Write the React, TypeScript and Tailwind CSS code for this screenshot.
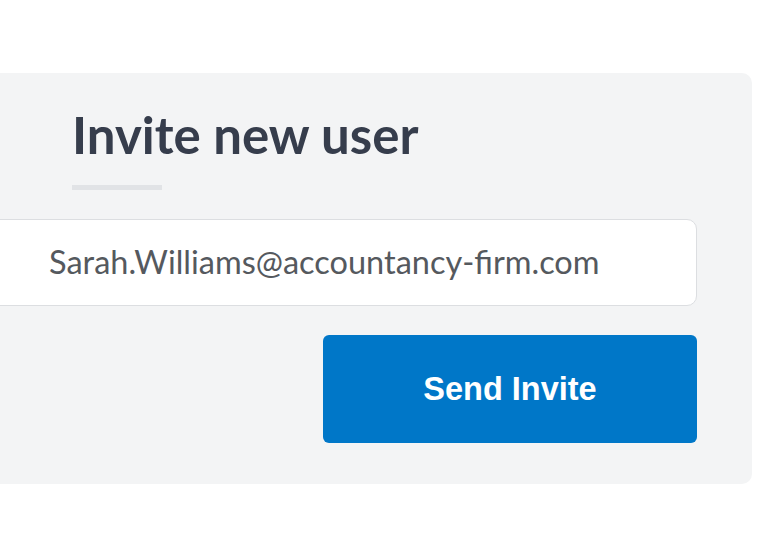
export default function App() {
  return (
    <div className="w-[768px] h-[560px] bg-white overflow-hidden pt-[73px]">
      <div className="-ml-[80px] w-[832px] h-[411px] rounded-[10px] bg-[#f3f4f5] pl-[56px] pr-[55px] pt-[30px]">
        <h1 className="ml-[96px] text-[51px] leading-[64px] font-bold text-[#363d4c] font-['Lato',sans-serif]">
          Invite new user
        </h1>
        <div className="ml-[96px] mt-[18px] w-[90px] h-[5px] bg-[#e1e3e6]" />
        <div className="mt-[29px] h-[87px] rounded-[10px] border border-[#dcdee1] bg-white flex items-center pl-[72px] text-[32.5px] text-[#55595e] font-['Lato',sans-serif]">
          Sarah.Williams@accountancy-firm.com
        </div>
        <div className="mt-[29px] flex justify-end">
          <button className="w-[374px] h-[108px] rounded-[6px] bg-[#0077c8] text-white text-[32.5px] font-bold font-['Liberation_Sans',Arial,sans-serif]">
            Send Invite
          </button>
        </div>
      </div>
    </div>
  );
}
